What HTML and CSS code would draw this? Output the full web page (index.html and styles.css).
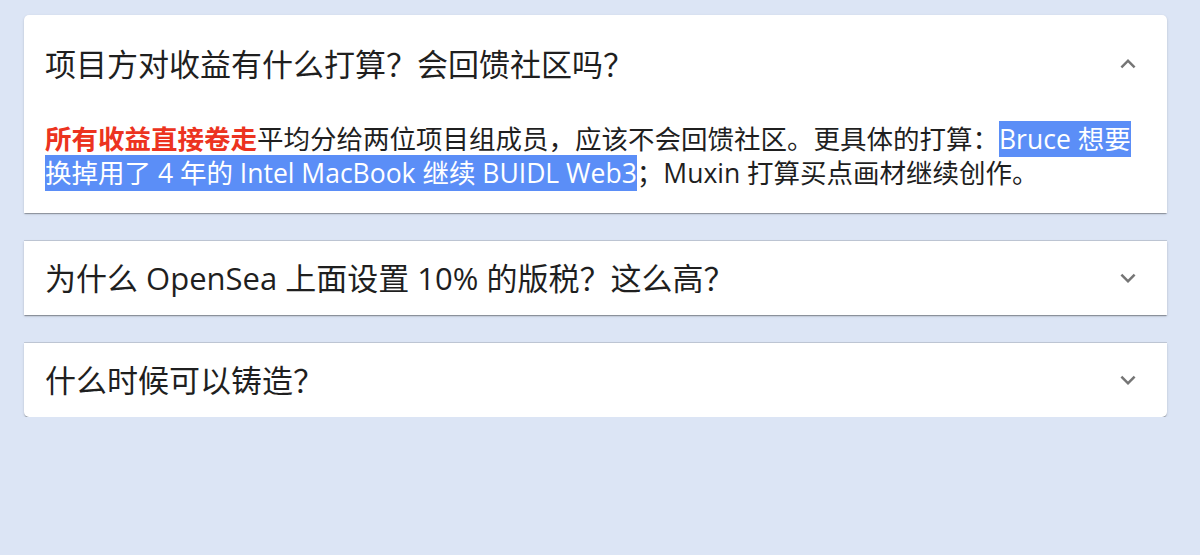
FILE: index.html
```html
<!DOCTYPE html>
<html lang="zh-CN">
<head>
    <meta charset="UTF-8">
    <meta name="viewport" content="width=device-width, initial-scale=1.0">
    <title>FAQ</title>
    <link rel="stylesheet" href="styles.css">
</head>
<body>
    <div class="faq">
        <!-- Открытый вопрос -->
        <div class="item open">
            <div class="summary">
                <span class="question">项目方对收益有什么打算？会回馈社区吗？</span>
                <svg class="arrow up" viewBox="0 0 24 24"><path d="M16.59 8.59 12 13.17 7.41 8.59 6 10l6 6 6-6z"/></svg>
            </div>
            <div class="details">
                <p><b class="red">所有收益直接卷走</b>平均分给两位项目组成员，应该不会回馈社区。更具体的打算：<span class="mark">Bruce 想要 换掉用了 4 年的 Intel MacBook 继续 BUIDL Web3</span>；Muxin 打算买点画材继续创作。</p>
            </div>
        </div>

        <div class="item">
            <div class="summary">
                <span class="question">为什么 OpenSea 上面设置 10% 的版税？这么高？</span>
                <svg class="arrow" viewBox="0 0 24 24"><path d="M16.59 8.59 12 13.17 7.41 8.59 6 10l6 6 6-6z"/></svg>
            </div>
        </div>

        <div class="item">
            <div class="summary">
                <span class="question">什么时候可以铸造？</span>
                <svg class="arrow" viewBox="0 0 24 24"><path d="M16.59 8.59 12 13.17 7.41 8.59 6 10l6 6 6-6z"/></svg>
            </div>
        </div>
    </div>
</body>
</html>
```

FILE: styles.css
```css
body {
    background-color: #dce5f5;
    margin: 0;
    font-family: "Open Sans", "Noto Sans CJK SC", sans-serif;
    color: rgba(0, 0, 0, 0.87);
}

.faq {
    display: flex;
    flex-direction: column;
    gap: 28px;
    padding: 15px 33px 0 24px;
}

.item {
    background: #ffffff;
    position: relative;
    box-shadow: 0 2px 1px -1px rgba(0, 0, 0, 0.2), 0 1px 1px 0 rgba(0, 0, 0, 0.14), 0 1px 3px 0 rgba(0, 0, 0, 0.12);
}

/* линия сверху как у mui */
.item + .item::before {
    content: "";
    position: absolute;
    top: -1px;
    left: 0;
    right: 0;
    height: 1px;
    background: rgba(0, 0, 0, 0.12);
}

.item:first-child {
    border-radius: 5px 5px 0 0;
}

.item:last-child {
    border-radius: 0 0 5px 5px;
}

.summary {
    display: flex;
    align-items: center;
    justify-content: space-between;
    min-height: 74px;
    padding: 0 24px 0 21px;
}

.open .summary {
    min-height: 97px;
}

.question {
    font-size: 31px;
    line-height: 40px;
    color: #1f1f1f;
}

.arrow {
    width: 30px;
    height: 30px;
    fill: rgba(0, 0, 0, 0.54);
}

.arrow.up {
    transform: rotate(180deg);
}

.details {
    padding: 10px 24px 23px 21px;
}

.details p {
    margin: 0;
    font-size: 26.5px;
    line-height: 34px;
    color: #1f1f1f;
}

.red {
    color: #ec3320;
}

.mark {
    background: #5b8ef7;
    color: #ffffff;
}
```
